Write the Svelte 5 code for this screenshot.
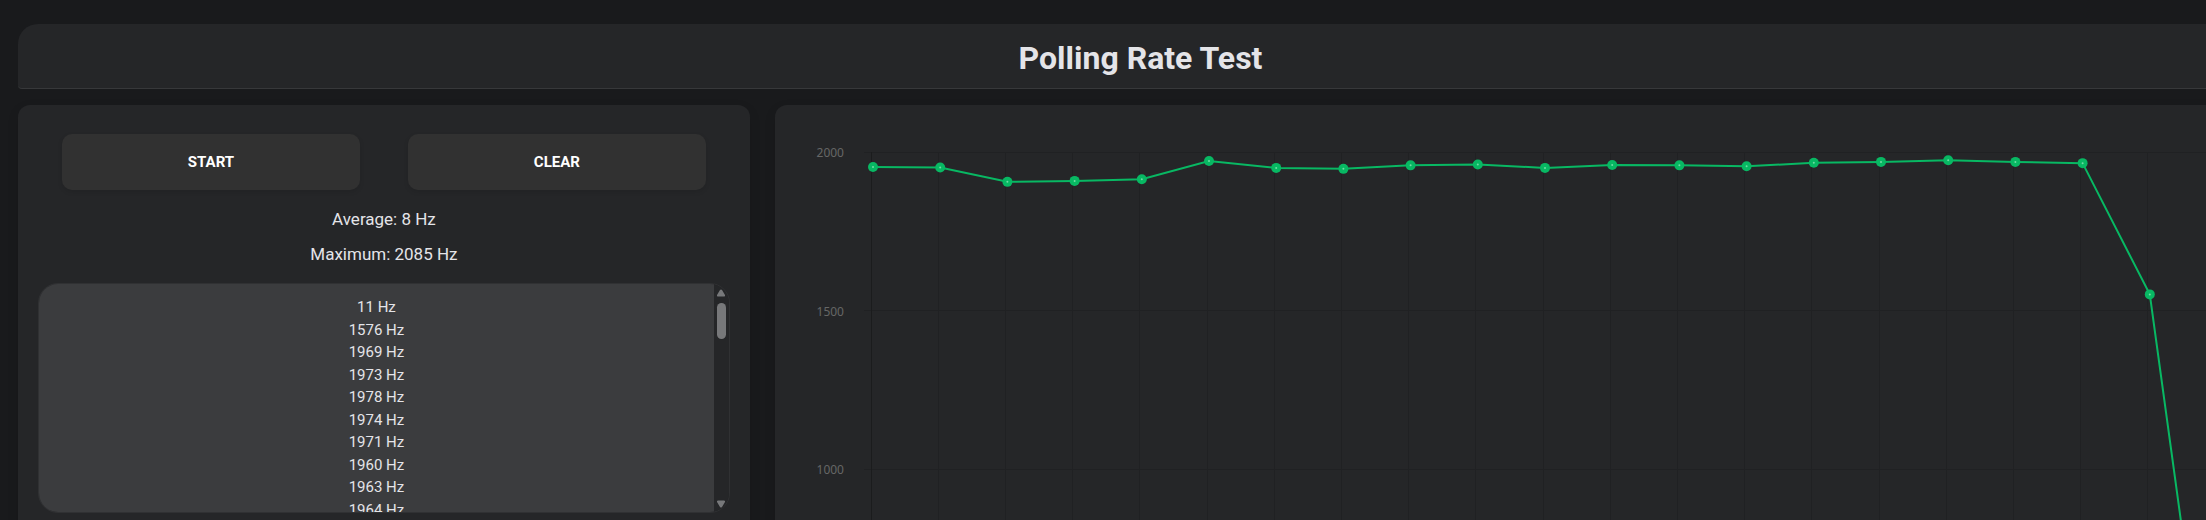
<script lang="ts">
  /**
   * Polling Rate Test
   *
   * Controls and sample log on the left, live chart on the right
   */

  const log = [11, 1576, 1969, 1973, 1978, 1974, 1971, 1960, 1963, 1964];

  const samples = [
    1956, 1954, 1909, 1912, 1917, 1975, 1953, 1950, 1961, 1964, 1953, 1962, 1961, 1958, 1969,
    1972, 1977, 1972, 1968, 1554, 11,
  ];

  const ticks = [2000, 1500, 1000, 500, 0];

  /** Plot area, in pixels */
  const top = 48;
  const left = 97;
  const bottom = 682;
  const step = 67.2;

  let chartWidth = $state(1488);
  let average = $state(8);
  let maximum = $state(2085);
  let readings = $state(log);
  let right = $derived(chartWidth - 46);

  function x(i: number) {
    return left + 1 + i * step;
  }

  function y(hz: number) {
    return bottom - (hz / 2000) * (bottom - top);
  }

  let line = $derived(samples.map((hz, i) => `${x(i)},${y(hz)}`).join(' '));

  function clear() {
    average = 0;
    maximum = 0;
    readings = [];
  }
</script>

<div class="page">
  <header class="header">
    <h1>Polling Rate Test</h1>
  </header>

  <main class="content">
    <section class="panel controls">
      <div class="buttons">
        <button type="button">START</button>
        <button type="button" onclick={clear}>CLEAR</button>
      </div>

      <p class="stat">Average: {average} Hz</p>
      <p class="stat">Maximum: {maximum} Hz</p>

      <div class="log">
        <ul class="log__list">
          {#each readings as hz}
            <li>{hz} Hz</li>
          {/each}
        </ul>
        <div class="log__bar" aria-hidden="true">
          <svg width="10" height="8" viewBox="0 0 10 8">
            <path d="M4 1Q5 0 6 1L9 6Q9.500 7.500 8 7.500H2Q.5 7.500 1 6Z" />
          </svg>
          <span class="log__thumb"></span>
          <svg width="10" height="8" viewBox="0 0 10 8">
            <path d="M4 7Q5 8 6 7L9 2Q9.500 .5 8 .5H2Q.5 .5 1 2Z" />
          </svg>
        </div>
      </div>
    </section>

    <section class="panel chart" bind:clientWidth={chartWidth}>
      <svg class="chart__plot" width={chartWidth} height="740" role="img" aria-label="Polling rate">
        {#each ticks as hz}
          <line class="grid" x1={left - 8} x2={right} y1={Math.floor(y(hz)) - 0.5} y2={Math.floor(y(hz)) - 0.5} />
          <text class="tick" x="69" y={y(hz) + 4}>{hz}</text>
        {/each}
        {#each samples as _, i}
          <line
            class="grid"
            class:grid--axis={i === 0}
            x1={Math.floor(x(i)) - 1.5}
            x2={Math.floor(x(i)) - 1.5}
            y1={top - 1}
            y2={bottom}
          />
        {/each}
        <polyline class="series" points={line} />
        {#each samples as hz, i}
          <circle class="dot" cx={x(i)} cy={y(hz)} r="5" />
          <circle class="dot__core" cx={x(i)} cy={y(hz)} r="1" />
        {/each}
      </svg>
    </section>
  </main>
</div>

<style>
  :global(body) {
    margin: 0;
    overflow: hidden;
    background: #191a1c;
  }

  .page {
    box-sizing: border-box;
    height: 100vh;
    /* the right edge runs past the window */
    margin-right: -57px;
    padding: 24px 0 0 18px;
    overflow: hidden;
    font-family: Roboto, sans-serif;
    color: #e4e4e8;
  }

  .header {
    border-bottom: 1px solid #37383a;
    border-radius: 20px 20px 4px 4px;
    background: #252628;
    text-align: center;
  }

  h1 {
    margin: 0;
    padding: 10px 0 6px;
    font-size: 32px;
    font-weight: 700;
    line-height: 48px;
  }

  .content {
    display: grid;
    grid-template-columns: 30fr 61fr;
    gap: 25px;
    margin-top: 16px;
  }

  .panel {
    min-width: 0;
    border-radius: 12px;
    background: #252628;
    box-shadow: 0 4px 12px rgba(0, 0, 0, 0.1);
  }

  .controls {
    padding: 29px 20px 20px;
  }

  .buttons {
    display: flex;
    justify-content: space-around;
    margin-bottom: 12px;
  }

  button {
    width: 43%;
    height: 56px;
    border: none;
    border-radius: 10px;
    background: #313131;
    color: #fff;
    font-family: inherit;
    font-size: 15px;
    font-weight: 700;
    box-shadow: 0 2px 5px rgba(0, 0, 0, 0.1);
    cursor: pointer;
  }

  .stat {
    margin: 0;
    font-size: 17px;
    line-height: 35px;
    text-align: center;
  }

  /* Sample log */
  .log {
    box-sizing: border-box;
    display: flex;
    height: 230px;
    margin-top: 11px;
    border: 1px solid #303133;
    border-radius: 20px;
    overflow: hidden;
  }

  .log__list {
    flex: 1;
    margin: 0;
    padding: 12px 0;
    overflow: hidden;
    background: #3b3c3e;
    font-size: 15px;
    line-height: 1.5;
    list-style: none;
    text-align: center;
  }

  .log__bar {
    display: flex;
    flex-direction: column;
    align-items: center;
    width: 15px;
    padding: 5px 0 4px;
    background: #252628;
    fill: #77787a;
  }

  .log__thumb {
    width: 9px;
    height: 36px;
    margin: 6px 0 auto;
    border-radius: 5px;
    background: #77787a;
  }

  /* Chart */
  .chart__plot {
    display: block;
  }

  .grid {
    stroke: #202123;
  }

  .grid--axis {
    stroke: #1b1c1d;
  }

  .tick {
    fill: #666;
    font-family: 'Noto Sans', sans-serif;
    font-size: 12px;
    text-anchor: end;
  }

  .series {
    fill: none;
    stroke: #08b863;
    stroke-width: 2;
  }

  .dot {
    fill: #08b863;
  }

  .dot__core {
    fill: #6fdca5;
  }
</style>
